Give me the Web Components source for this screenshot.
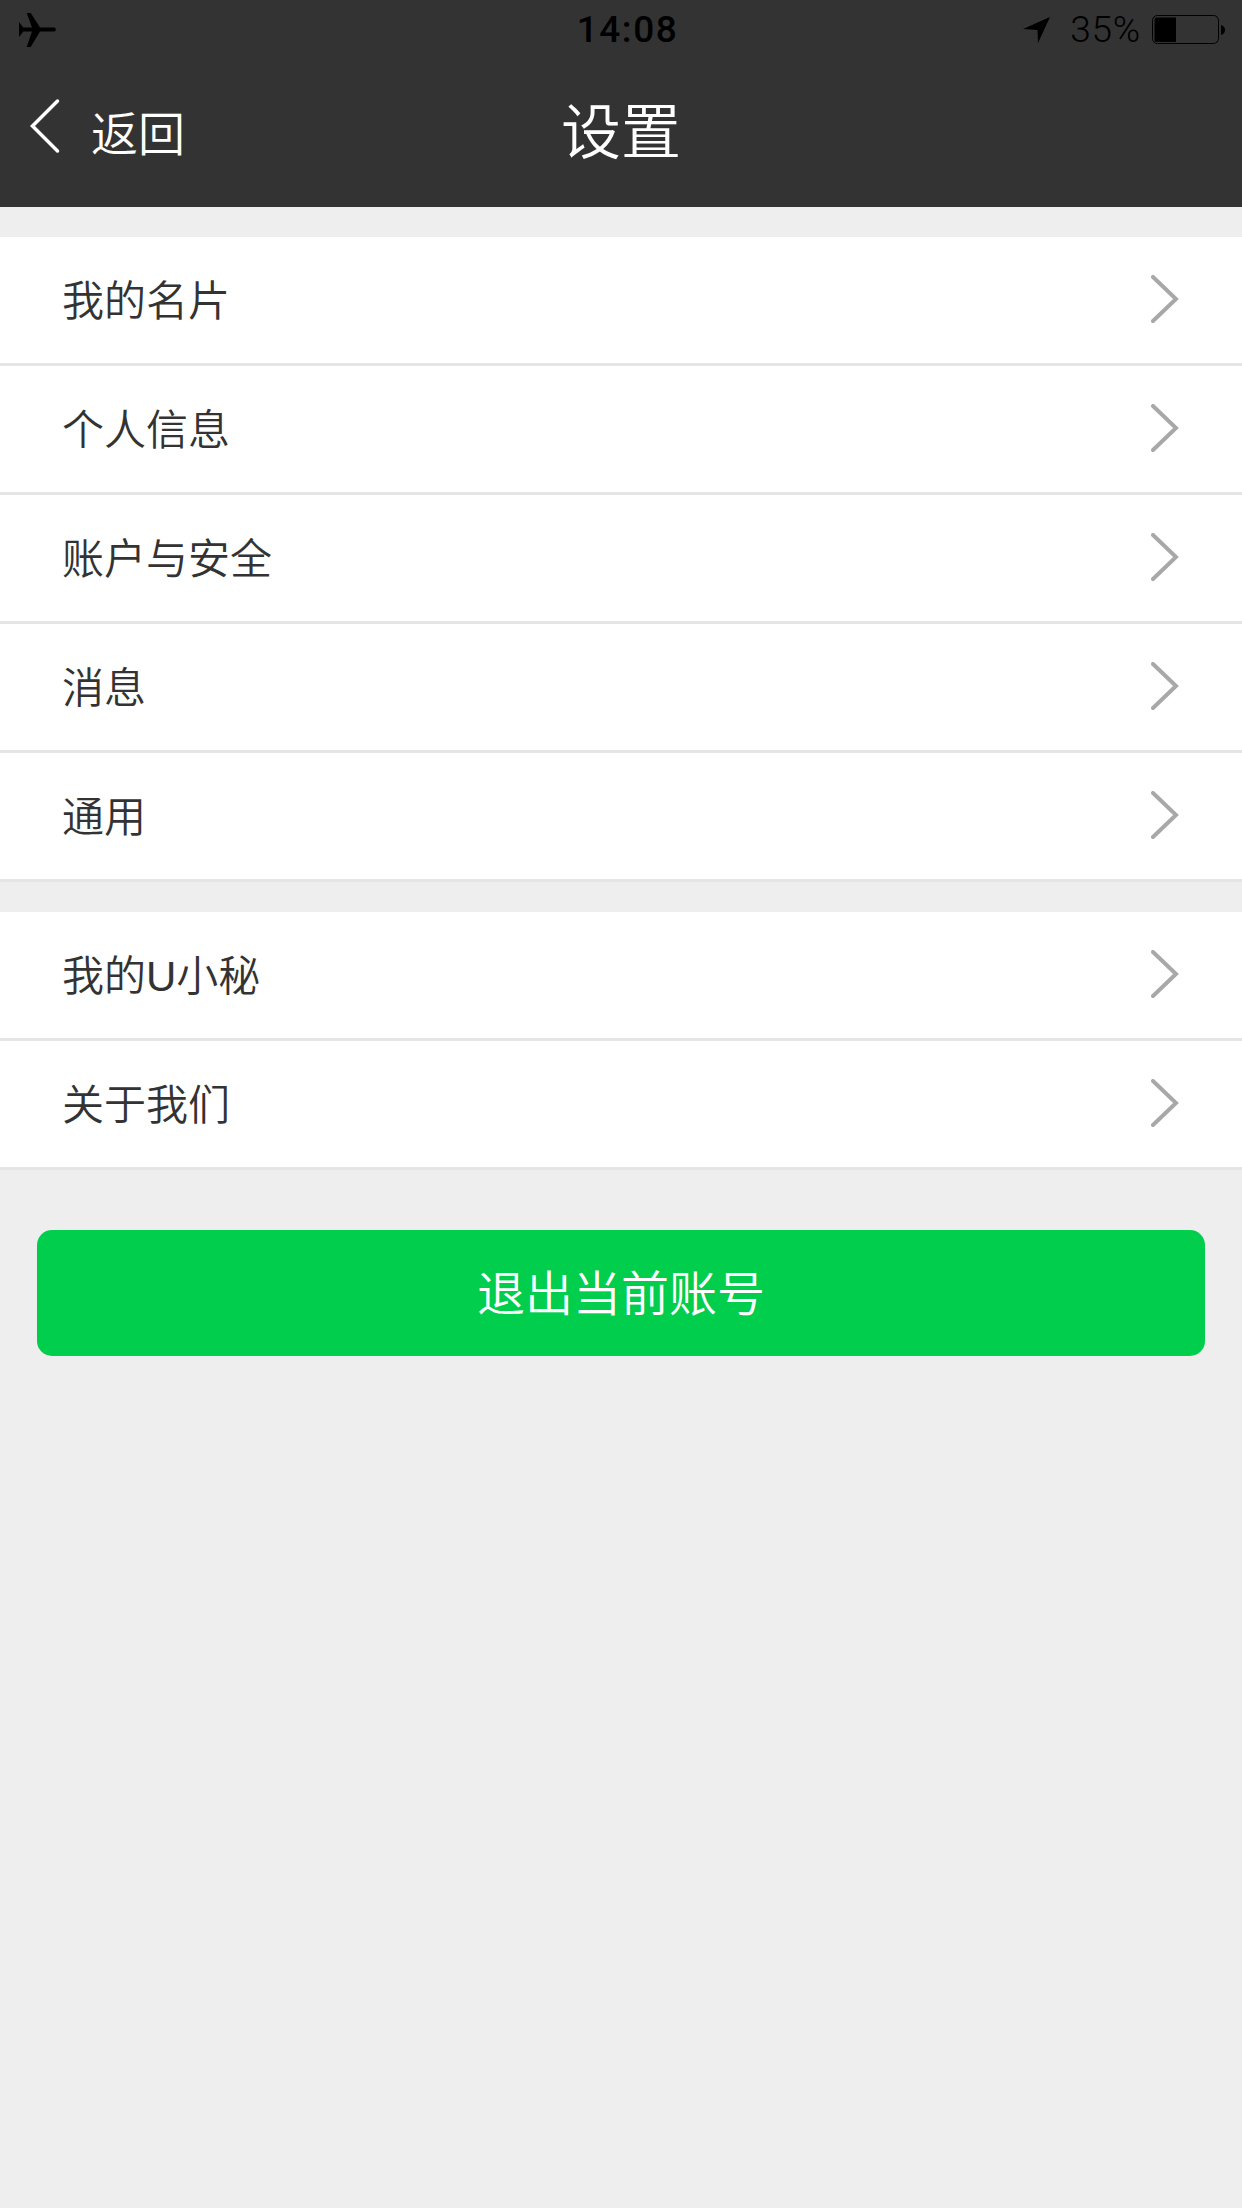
<!DOCTYPE html>
<html>
<head>
<meta charset="utf-8">
<title>设置</title>
<style>
  html, body { margin: 0; padding: 0; background: #eeeeee; }
  body { font-family: "Liberation Sans", "Noto Sans CJK SC", sans-serif; }
</style>
</head>
<body>
<settings-page>
  <nav-header slot="header" title="设置" back="返回"></nav-header>
  <settings-group>
    <settings-row>我的名片</settings-row>
    <settings-row>个人信息</settings-row>
    <settings-row>账户与安全</settings-row>
    <settings-row>消息</settings-row>
    <settings-row>通用</settings-row>
  </settings-group>
  <settings-group>
    <settings-row>我的U小秘</settings-row>
    <settings-row>关于我们</settings-row>
  </settings-group>
  <action-button>退出当前账号</action-button>
</settings-page>

<script>
class SettingsPage extends HTMLElement {
  constructor(){
    super()
    this.attachShadow({mode: 'open'})
    this.shadowRoot.innerHTML = `
      <style>
        :host { display: block; height: 2208px; background: #eeeeee; overflow: hidden; }
        .body { display: flex; flex-direction: column; gap: 30px; padding-top: 30px; }
      </style>
      <slot name="header"></slot>
      <div class="body"><slot></slot></div>
    `
  }
}
customElements.define('settings-page', SettingsPage)

class NavHeader extends HTMLElement {
  constructor(){
    super()
    this.attachShadow({mode: 'open'})
    this.shadowRoot.innerHTML = `
      <style>
        :host { display: block; height: 207px; background: #333333; color: #fff; }
        svg { display: block; }
        .status { height: 60px; display: grid; grid-template-columns: 1fr auto 1fr; align-items: center; padding: 0 17px 0 19px; color: #000; }
        .clock { font: 500 37px/40px Roboto, sans-serif; letter-spacing: 1.500px; margin-left: 11px; }
        .right { display: flex; align-items: center; justify-content: flex-end; }
        .arrow { margin-right: 20px; }
        .pct { font: 300 37px/40px Roboto, sans-serif; letter-spacing: .8px; margin-right: 11px; }
        .bar { height: 147px; display: grid; grid-template-columns: 1fr auto 1fr; align-items: center; }
        .back { display: flex; align-items: center; gap: 29px; padding-left: 30px; }
        .back svg { margin-bottom: 15px; }
        .back span { font-size: 47px; line-height: 60px; margin-top: 3px; font-weight: 350; }
        .title { font-size: 60px; line-height: 76px; font-weight: 350; }
      </style>
      <div class="status">
        <svg width="38" height="34" viewBox="0 0 38 34">
          <path fill="#000" d="M0 9 4.300 14.500H13L7.700 0H11.700L21 14.500H35C37.500 14.500 37.500 18.500 35 18.500H21L11.700 34H7.700L13 18.500H4.300L0 24Z"/>
        </svg>
        <div class="clock">14:08</div>
        <div class="right">
          <svg class="arrow" width="27" height="26" viewBox="0 0 27 26">
            <path fill="#000" d="M0 12 27 0 15 26 14.500 13Z"/>
          </svg>
          <span class="pct">35%</span>
          <svg width="73" height="30" viewBox="0 0 73 30">
            <rect x=".5" y=".5" width="66" height="28" rx="5" fill="none" stroke="#000" stroke-width="1"/>
            <path fill="#000" d="M5 2.500H24V27H5A2.500 2.500 0 0 1 2.500 24.500V5A2.500 2.500 0 0 1 5 2.500Z"/>
            <path fill="#000" d="M69 10C71.500 10.500 73 12.500 73 15S71.500 19.500 69 20Z"/>
          </svg>
        </div>
      </div>
      <div class="bar">
        <div class="back">
          <svg width="32" height="56" viewBox="0 0 32 56">
            <path d="M27.500 3 2.500 28 27.500 53" fill="none" stroke="#fff" stroke-width="3.500" stroke-linecap="round"/>
          </svg>
          <span>${this.getAttribute('back')}</span>
        </div>
        <div class="title">${this.getAttribute('title')}</div>
      </div>
    `
  }
}
customElements.define('nav-header', NavHeader)

class SettingsGroup extends HTMLElement {
  constructor(){
    super()
    this.attachShadow({mode: 'open'})
    this.shadowRoot.innerHTML = `
      <style>
        :host { display: flex; flex-direction: column; }
      </style>
      <slot></slot>
    `
  }
}
customElements.define('settings-group', SettingsGroup)

class SettingsRow extends HTMLElement {
  constructor(){
    super()
    this.attachShadow({mode: 'open'})
    this.shadowRoot.innerHTML = `
      <style>
        :host { display: flex; align-items: center; justify-content: space-between; box-sizing: border-box; height: 129px; padding: 0 63px 3px 62px; background: #fff; border-bottom: 3px solid #e5e5e5; color: #333; font-size: 42px; font-weight: 350; }
        .label { padding-bottom: 3px; }
        svg { display: block; }
      </style>
      <div class="label"><slot></slot></div>
      <svg width="28" height="48" viewBox="0 0 28 48">
        <path d="M2 2 25 24 2 46" fill="none" stroke="#a8a8a8" stroke-width="4" stroke-linecap="round"/>
      </svg>
    `
  }
}
customElements.define('settings-row', SettingsRow)

class ActionButton extends HTMLElement {
  constructor(){
    super()
    this.attachShadow({mode: 'open'})
    this.shadowRoot.innerHTML = `
      <style>
        :host { display: flex; align-items: center; justify-content: center; box-sizing: border-box; height: 126px; margin: 30px 37px 0; padding-bottom: 6px; background: #00ce4c; border-radius: 15px; color: #fff; font-size: 48px; font-weight: 350; }
      </style>
      <slot></slot>
    `
  }
}
customElements.define('action-button', ActionButton)
</script>
</body>
</html>
